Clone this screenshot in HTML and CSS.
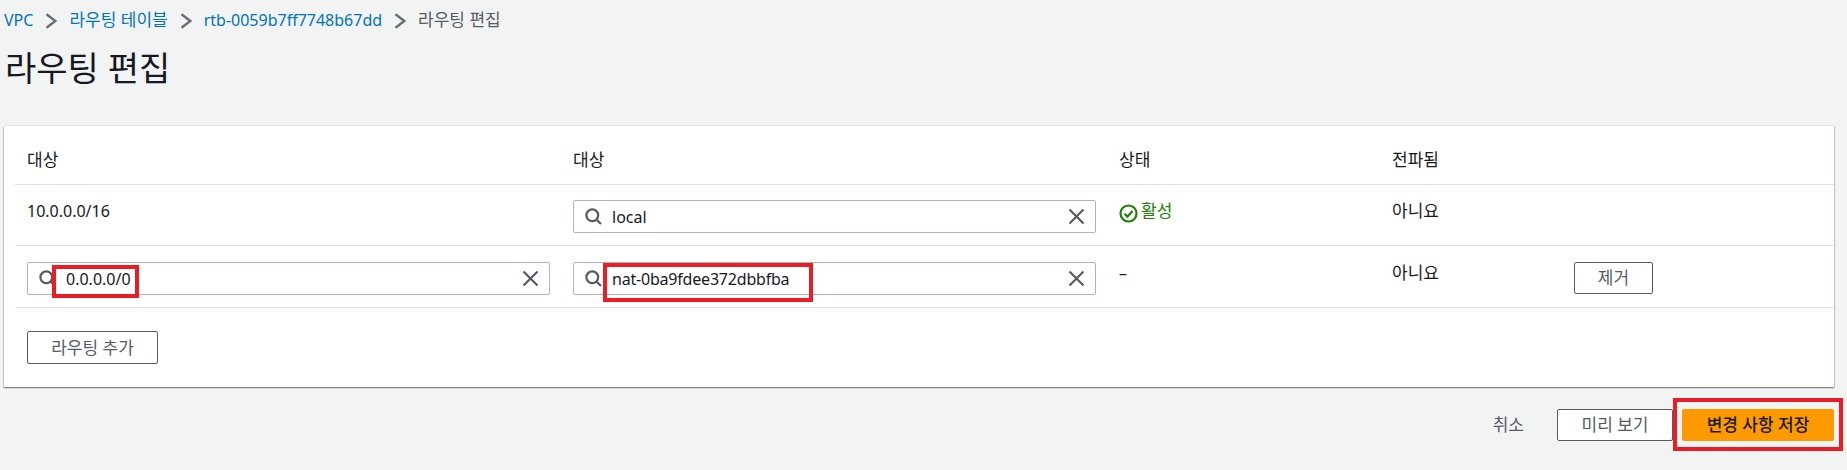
FILE: index.html
```html
<!DOCTYPE html>
<html lang="ko">
<head>
<meta charset="utf-8">
<title>라우팅 편집</title>
<link rel="stylesheet" href="styles.css">
</head>
<body>
<svg class="defs" width="0" height="0" aria-hidden="true">
  <symbol id="search" viewBox="0 0 17 17"><circle cx="7.300" cy="7.300" r="5.900" fill="none" stroke="currentColor" stroke-width="2.200"/><path d="M11.500 11.500l4.500 4.500" fill="none" stroke="currentColor" stroke-width="2.200"/></symbol>
  <symbol id="close" viewBox="0 0 17 17"><path d="M1.500 1.500l14 14M15.500 1.500l-14 14" fill="none" stroke="currentColor" stroke-width="2.200"/></symbol>
  <symbol id="chev" viewBox="0 0 12 16"><path d="M1.500 1.200l8.800 6.800-8.800 6.800" fill="none" stroke="currentColor" stroke-width="2.400"/></symbol>
</svg>
<nav class="crumbs">
  <a class="link">VPC</a><svg class="chev"><use href="#chev"/></svg>
  <a class="link ko">라우팅 테이블</a><svg class="chev"><use href="#chev"/></svg>
  <a class="link">rtb-0059b7ff7748b67dd</a><svg class="chev"><use href="#chev"/></svg>
  <span class="current ko">라우팅 편집</span>
</nav>
<h1 class="title">라우팅 편집</h1>
<section class="card">
  <div class="row head">
    <div>대상</div><div>대상</div><div>상태</div><div>전파됨</div><div></div>
  </div>
  <div class="row body-row first">
    <div class="cell-text num">10.0.0.0/16</div>
    <div class="input"><svg class="i-search"><use href="#search"/></svg><span class="val">local</span><svg class="i-close"><use href="#close"/></svg></div>
    <div class="cell-text status"><svg class="i-check" viewBox="0 0 19 19"><circle cx="9.500" cy="9.500" r="8" fill="none" stroke="currentColor" stroke-width="2.200"/><path d="M5.600 9.800l2.900 2.800 5-5.500" fill="none" stroke="currentColor" stroke-width="2.200"/></svg>활성</div>
    <div class="cell-text">아니요</div>
    <div></div>
  </div>
  <div class="row body-row second">
    <div class="input"><svg class="i-search"><use href="#search"/></svg><span class="val">0.0.0.0/0</span><svg class="i-close"><use href="#close"/></svg><span class="mark mark-a"></span></div>
    <div class="input"><svg class="i-search"><use href="#search"/></svg><span class="val val-tight">nat-0ba9fdee372dbbfba</span><svg class="i-close"><use href="#close"/></svg><span class="mark mark-b"></span></div>
    <div class="cell-text num">–</div>
    <div class="cell-text">아니요</div>
    <div><button class="btn btn-remove">제거</button></div>
  </div>
  <div class="add-wrap"><button class="btn btn-add">라우팅 추가</button></div>
</section>
<footer class="actions">
  <span class="cancel">취소</span>
  <button class="btn btn-preview">미리 보기</button>
  <span class="primary-wrap"><button class="btn btn-primary">변경 사항 저장</button><span class="mark mark-c"></span></span>
</footer>
</body>
</html>
```
FILE: styles.css
```css
* { box-sizing: border-box; }
html, body { margin: 0; height: 470px; overflow: hidden; }
body {
  background: #f2f3f3;
  color: #16191f;
  font-family: "Noto Sans", "Noto Sans CJK KR", sans-serif;
  font-size: 17px;
  line-height: 20px;
  padding: 0 13px 0 4px;
}
.defs { position: absolute; }
.crumbs { height: 40px; display: flex; align-items: center; font-size: 16px; }
.ko { font-size: 17px; }
.link { color: #0073bb; }
.current { color: #545b64; }
.chev { width: 12px; height: 16px; color: #687078; margin: 1px 12px 0 12px; }
.title { margin: 0; padding: 9px 0 0 1px; height: 86px; font-size: 34px; line-height: 38px; font-weight: 400; }
.card {
  background: #fff;
  height: 261px;
  padding-left: 11px;
  box-shadow: 0 1px 1px 0 rgba(0,28,36,.3), 1px 1px 1px 0 rgba(0,28,36,.15), -1px 1px 1px 0 rgba(0,28,36,.15), 0 -1px 1px 0 rgba(0,28,36,.06);
}
.row {
  display: grid;
  grid-template-columns: 546px 546px 273px 182px 1fr;
  padding-left: 12px;
  border-bottom: 1px solid #dfe3e3;
}
.head { height: 59px; padding-top: 24px; }
.first { height: 61px; padding-top: 15px; }
.second { height: 62px; padding-top: 16px; }
.cell-text { padding-top: 1px; }
.num { font-size: 16px; }
.status { color: #1d8102; display: flex; align-items: flex-start; gap: 3px; }
.i-check { width: 19px; height: 19px; margin-top: 3px; }
.input {
  position: relative;
  width: 523px;
  height: 33px;
  display: flex;
  align-items: center;
  background: #fff;
  border: 1px solid #aab7b8;
  border-radius: 2px;
  padding: 0 10px 0 11px;
  color: #545b64;
}
.i-search { width: 17px; height: 17px; flex: none; }
.i-close { width: 17px; height: 17px; flex: none; margin-left: auto; }
.val { color: #16191f; margin-left: 10px; font-size: 16px; }
.val-tight { letter-spacing: -.2px; }
.mark { position: absolute; border: 4px solid #ed1c24; pointer-events: none; }
.mark-a { left: 24px; top: 2px; width: 87px; height: 33px; }
.mark-b { left: 29px; top: 0; width: 210px; height: 39px; }
.mark-c { left: -9px; top: -11px; width: 170px; height: 53px; }
.btn {
  font: inherit;
  height: 32px;
  border: 1px solid #545b64;
  border-radius: 2px;
  background: #fff;
  color: #545b64;
  padding: 0;
}
.btn-remove { width: 79px; }
.btn-add { width: 131px; height: 33px; }
.add-wrap { padding: 23px 0 0 12px; }
.actions { display: flex; align-items: center; justify-content: flex-end; height: 32px; margin-top: 22px; }
.cancel { color: #545b64; margin-right: 33px; }
.btn-preview { width: 116px; }
.primary-wrap { position: relative; margin-left: 9px; display: block; height: 32px; }
.btn-primary { width: 152px; background: #f90; border-color: #f90; color: #16191f; font-weight: 500; }
```
